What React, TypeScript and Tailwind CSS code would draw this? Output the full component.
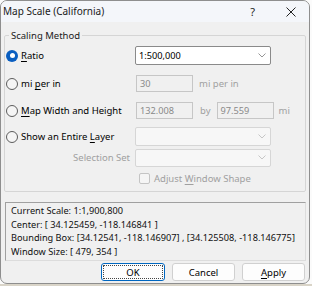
import React from "react";

const Chevron = ({ color }: { color: string }) => (
  <svg width="8" height="5" viewBox="0 0 8 5" className="shrink-0">
    <polyline points="0.5,0.5 4,4 7.5,0.5" fill="none" stroke={color} strokeWidth="0.9" />
  </svg>
);

const Radio = ({ checked }: { checked?: boolean }) =>
  checked ? (
    <span className="w-[12px] h-[12px] rounded-full bg-[#0a5ec0] flex items-center justify-center shrink-0">
      <span className="w-[5px] h-[5px] rounded-full bg-white" />
    </span>
  ) : (
    <span className="w-[12px] h-[12px] rounded-full border border-[#5c5c5c] bg-[#f5f5f5] shrink-0" />
  );

export default function App() {
  return (
    <div className="w-[312px] h-[286px] bg-[#fbfbfb] font-['Noto_Sans',sans-serif] text-[9.5px] leading-[13px] text-black">
      <div className="w-[310px] h-[284px] border border-[#8e8e8e] rounded-[7px] bg-[#f0f0f0] flex flex-col overflow-hidden">
        {/* Title bar */}
        <div className="h-[21px] bg-[#f4f6fa] flex items-center shrink-0">
          <span className="pl-[2px] text-[10px] text-[#1a1a1a]">Map Scale (California)</span>
          <span className="ml-auto mr-[31px] text-[11px] text-[#222]">?</span>
          <svg width="10" height="10" viewBox="0 0 10 10" className="mr-[13px]">
            <path d="M0.5 0.5 L9.5 9.5 M9.5 0.5 L0.5 9.5" stroke="#222" strokeWidth="1" />
          </svg>
        </div>

        <div className="flex flex-col px-[3px]">
          {/* Group box */}
          <fieldset className="mt-[7px] border border-[#d5d5d5] rounded-[2px] pb-[3px]">
            <legend className="ml-[4px] px-[2px] text-[#1a1a1a]">Scaling Method</legend>

            {/* Ratio */}
            <div className="mt-[4px] h-[19px] flex items-center">
              <div className="w-[130px] flex items-center gap-[3px] pl-[1px]">
                <Radio checked />
                <span><span className="underline underline-offset-2">R</span>atio</span>
              </div>
              <div className="w-[136px] h-[19px] bg-white border border-[#8a8a8a] rounded-[2px] flex items-center pl-[3px] pr-[4px] text-[9.2px]">
                <span className="flex-1">1:500,000</span>
                <Chevron color="#8a8a8a" />
              </div>
            </div>

            {/* mi per in */}
            <div className="mt-[9px] h-[19px] flex items-center">
              <div className="w-[130px] flex items-center gap-[3px] pl-[1px]">
                <Radio />
                <span>mi <span className="underline underline-offset-2">p</span>er in</span>
              </div>
              <div className="ml-[1px] w-[57px] h-[17px] border border-[#c6c6c6] bg-[#f0f0f0] pl-[3px] text-[#8a8a8a] text-[9.2px] flex items-center">30</div>
              <span className="ml-[6px] text-[#a0a0a0]">mi per in</span>
            </div>

            {/* Map width & height */}
            <div className="mt-[8px] h-[19px] flex items-center">
              <div className="w-[130px] flex items-center gap-[3px] pl-[1px]">
                <Radio />
                <span><span className="underline underline-offset-2">M</span>ap Width and Height</span>
              </div>
              <div className="ml-[1px] w-[57px] h-[17px] border border-[#c6c6c6] bg-[#f0f0f0] pl-[3px] text-[#8a8a8a] text-[9.2px] flex items-center">132.008</div>
              <span className="ml-[7px] text-[#a0a0a0]">by</span>
              <div className="ml-[6px] w-[57px] h-[17px] border border-[#c6c6c6] bg-[#f0f0f0] pl-[3px] text-[#8a8a8a] text-[9.2px] flex items-center">97.559</div>
              <span className="ml-[5px] text-[#a0a0a0]">mi</span>
            </div>

            {/* Entire layer */}
            <div className="mt-[7px] h-[19px] flex items-center">
              <div className="w-[130px] flex items-center gap-[3px] pl-[1px]">
                <Radio />
                <span>Show an Entire <span className="underline underline-offset-2">L</span>ayer</span>
              </div>
              <div className="w-[136px] h-[19px] bg-[#f7f7f7] border border-[#d6d6d6] rounded-[2px] flex items-center justify-end pr-[4px]">
                <Chevron color="#c0c0c0" />
              </div>
            </div>

            {/* Selection set */}
            <div className="mt-[2px] h-[19px] flex items-center">
              <div className="w-[130px] text-right pr-[5px] text-[#a0a0a0]">Selection Set</div>
              <div className="w-[136px] h-[18px] bg-[#f7f7f7] border border-[#d6d6d6] rounded-[2px] flex items-center justify-end pr-[4px]">
                <Chevron color="#c0c0c0" />
              </div>
            </div>

            {/* Checkbox */}
            <div className="mt-[2px] h-[19px] flex items-center">
              <div className="ml-[134px] w-[11px] h-[11px] border border-[#c4c4c4] rounded-[2px] bg-[#f5f5f5]" />
              <span className="ml-[4px] text-[#a0a0a0]">Adjust <span className="underline underline-offset-2">W</span>indow Shape</span>
            </div>
          </fieldset>

          {/* Info box */}
          <div className="mt-[10px] ml-[1px] h-[59px] border border-t-[#a0a0a0] border-l-[#a0a0a0] border-r-[#dcdcdc] border-b-[#dcdcdc] pl-[5px] pt-[1px] leading-[13.5px] text-[9.2px] text-[#111]">
            <div>Current Scale: 1:1,900,800</div>
            <div>Center: [ 34.125459, -118.146841 ]</div>
            <div>Bounding Box: [34.12541, -118.146907] , [34.125508, -118.146775]</div>
            <div>Window Size: [ 479, 354 ]</div>
          </div>

          {/* Buttons */}
          <div className="mt-[2px] flex justify-end gap-[7px] pr-[1px]">
            <button className="w-[64px] h-[18px] rounded-[3px] bg-[#fdfdfd] border border-[#0067c0] flex items-center justify-center p-[1px]">
              <span className="w-full h-full border border-dotted border-[#444] rounded-[1px] flex items-center justify-center">OK</span>
            </button>
            <button className="w-[63px] h-[18px] rounded-[3px] bg-[#fdfdfd] border border-[#d0d0d0] flex items-center justify-center">Cancel</button>
            <button className="w-[63px] h-[18px] rounded-[3px] bg-[#fdfdfd] border border-[#d0d0d0] flex items-center justify-center">
              <span><span className="underline underline-offset-2">A</span>pply</span>
            </button>
          </div>
        </div>
      </div>
      <div className="h-[2px] bg-[#d9d4c8]" />
    </div>
  );
}
